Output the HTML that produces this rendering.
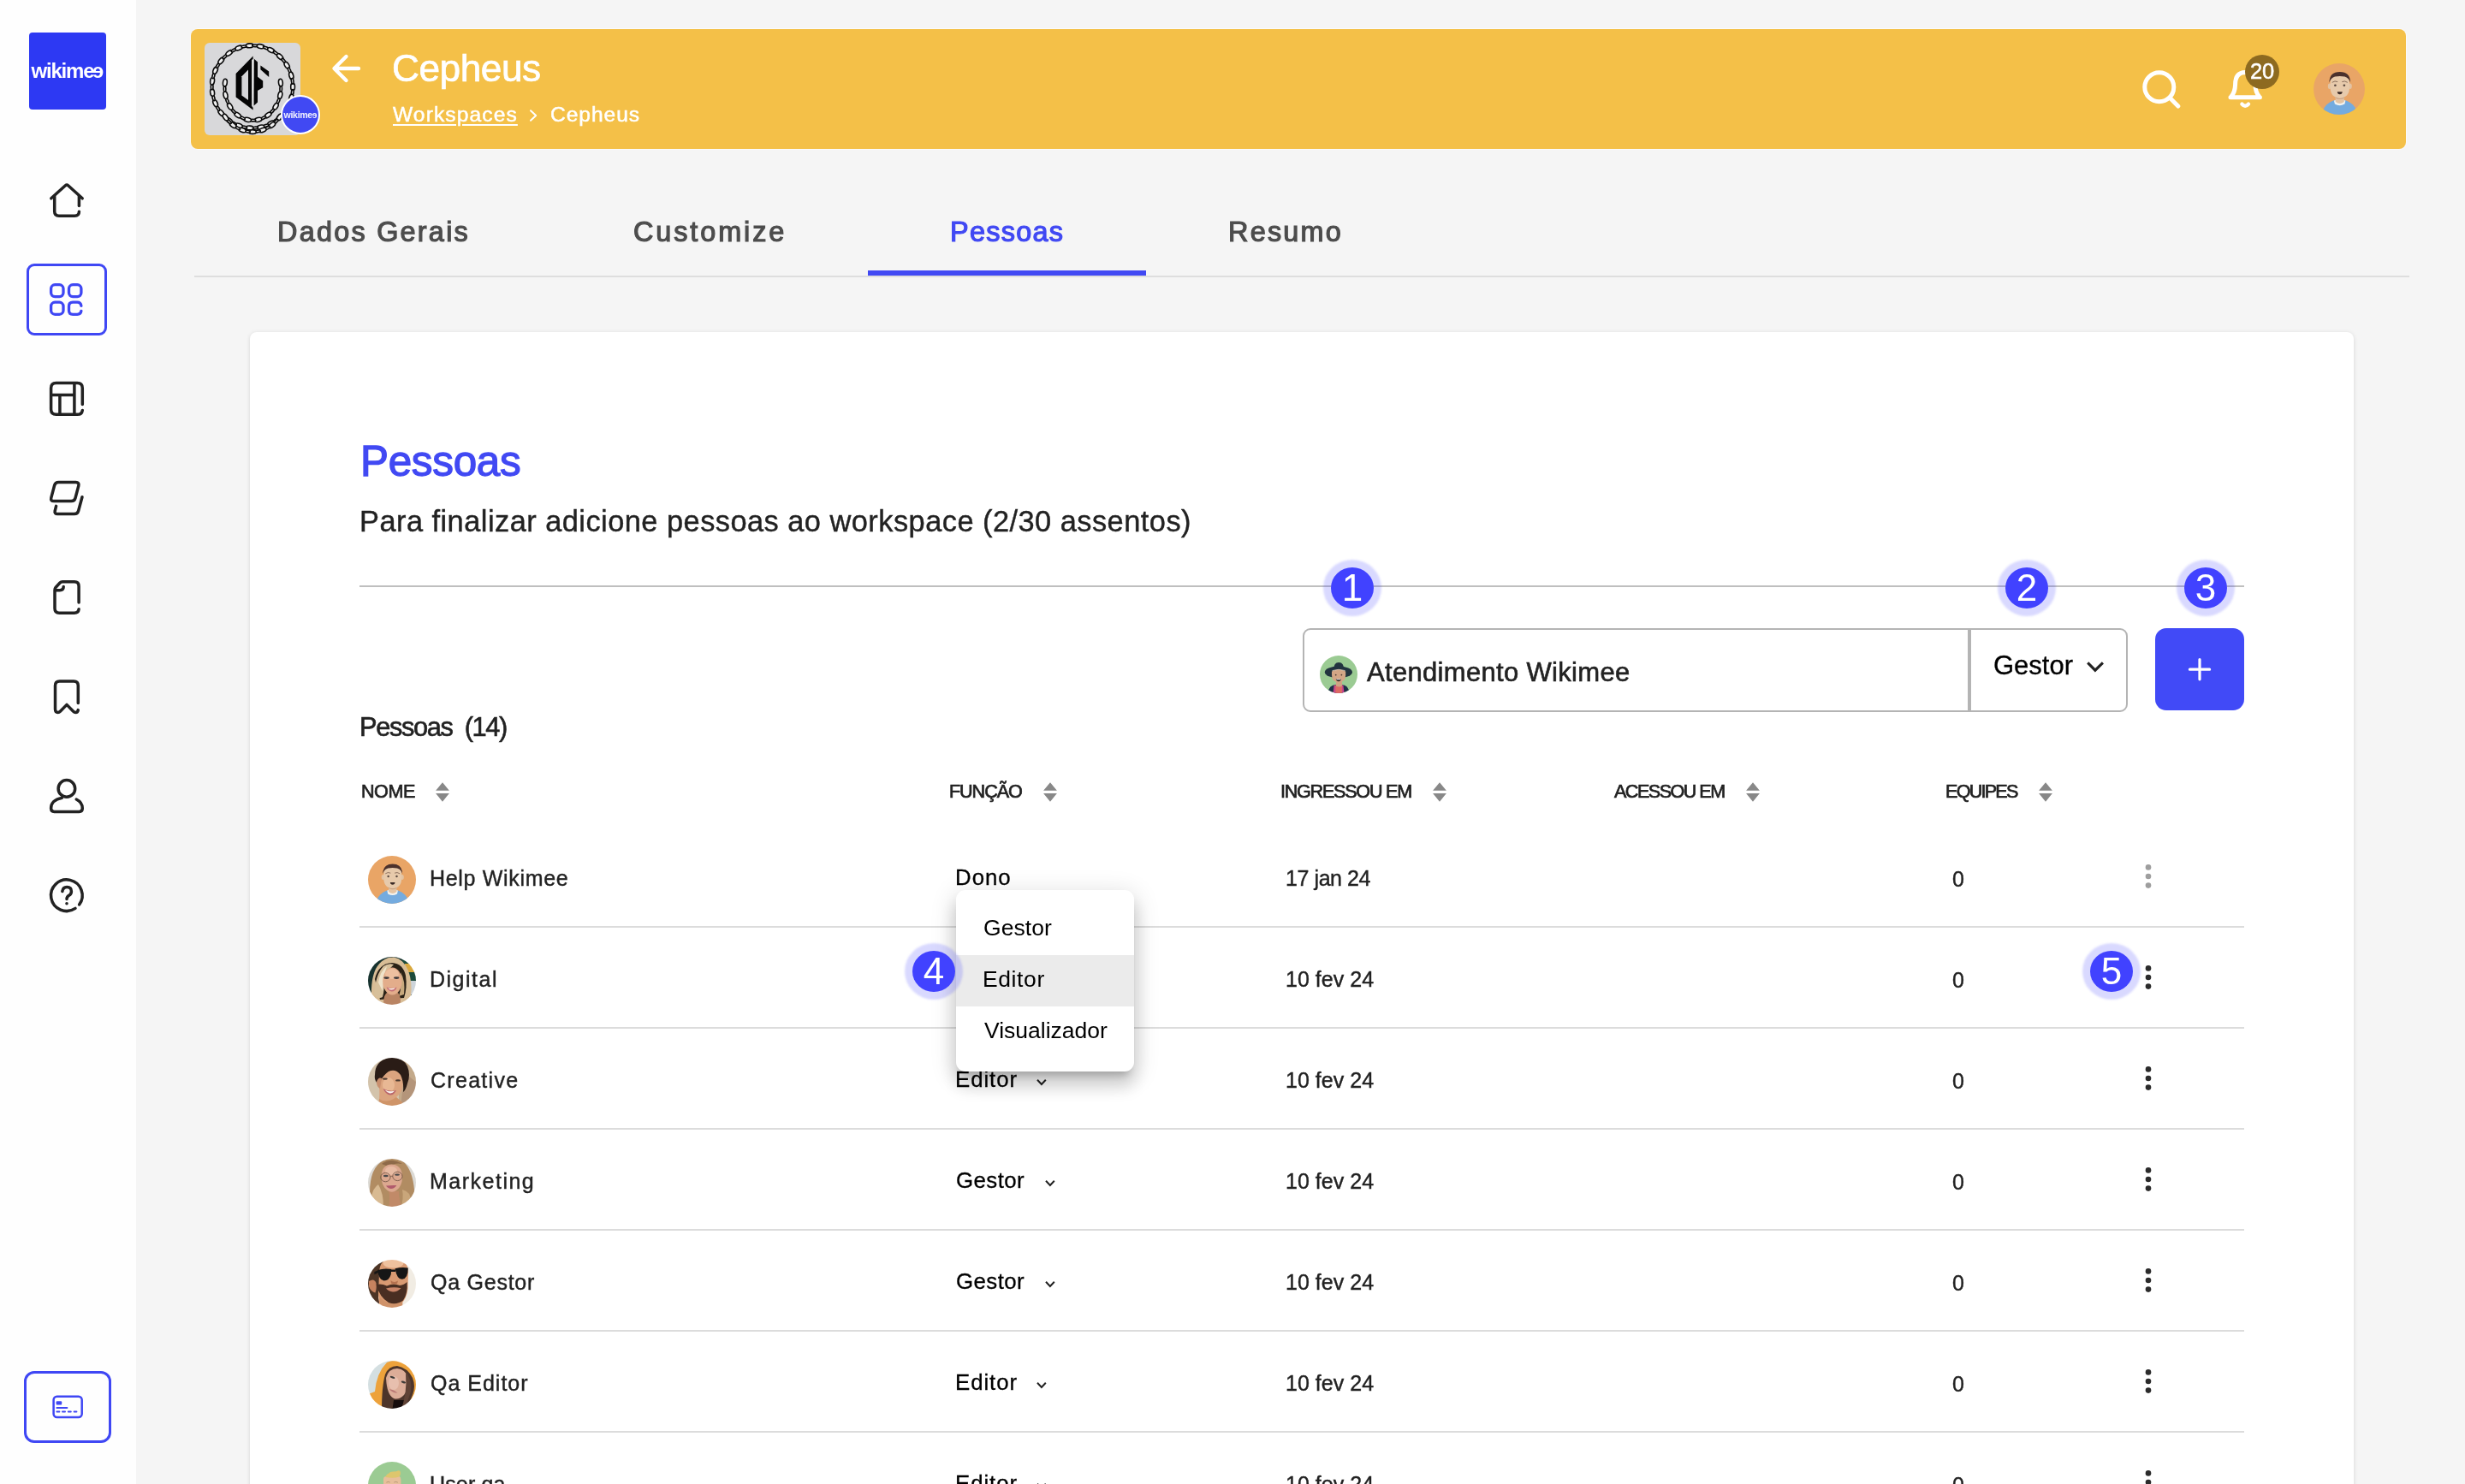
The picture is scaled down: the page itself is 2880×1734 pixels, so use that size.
<!DOCTYPE html>
<html lang="pt-BR">
<head>
<meta charset="utf-8">
<title>Cepheus - Pessoas | wikimee</title>
<style>
*{box-sizing:border-box;margin:0;padding:0}
html{overflow:hidden;background:#f5f5f5}
body{overflow:hidden}
.app{position:relative;width:2880px;height:1734px;overflow:hidden}
body{background:#f5f5f5;font-family:"Liberation Sans",Arial,sans-serif;color:#222}
.abs{position:absolute;display:block}
.t{position:absolute;line-height:1;white-space:nowrap;font-weight:400;display:block;will-change:transform}
h1,h2,p{margin:0}
a{color:inherit}
.z{z-index:6}
.side{position:absolute;left:0;top:0;width:159px;height:1734px;background:#fefefe}
.logo{position:absolute;left:34px;top:38px;width:90px;height:90px;border-radius:4px;background:#2d39f3}
.logotxt{position:absolute;left:0;width:90px;top:33px;text-align:center;color:#fff;font-weight:700;font-size:24px;line-height:1;letter-spacing:-1.2px;white-space:nowrap}
.flip{display:inline-block;transform:scaleX(-1)}
.logotxt,.wsb,.nbadge span,.badge{will-change:transform}
.navbox{position:absolute;left:31px;top:308px;width:94px;height:84px;border:3.5px solid #3f47f4;border-radius:9px}
.paybox{position:absolute;left:28px;top:1602px;width:102px;height:84px;border:3.5px solid #3f47f4;border-radius:12px}
.hdr{position:absolute;left:0;top:0;width:0;height:0}
.hdr:before{content:"";position:absolute;left:223px;top:34px;width:2588px;height:140px;border-radius:8px;background:#f4c048;box-shadow:0 0 0 1px rgba(255,255,255,.55)}
.wsbadge{position:absolute;left:328px;top:111px;width:46px;height:46px;border-radius:50%;background:#4149f3;border:2px solid #fff}
.wsb{position:absolute;left:0;width:42px;top:15.5px;text-align:center;color:rgba(255,255,255,.92);font-weight:700;font-size:10.6px;line-height:1;letter-spacing:-0.35px;white-space:nowrap}
.nbadge{position:absolute;left:2623px;top:64px;width:40px;height:40px;border-radius:50%;background:#8d6a20}
.nbadge span{position:absolute;left:0;top:6.5px;width:40px;text-align:center;color:#fff;font-size:25.5px;line-height:1;font-weight:400;letter-spacing:-0.3px;-webkit-text-stroke:0.5px}
.tabs{position:absolute;left:0;top:0;width:0;height:0}
.tabline{position:absolute;left:227px;top:321.5px;width:2588px;height:2.5px;background:#dedede}
.tabsel{position:absolute;left:1014px;top:316px;width:325px;height:6px;background:#4149f3}
.card{position:absolute;left:0;top:0;width:0;height:0}
.card:before{content:"";position:absolute;left:292px;top:388px;width:2458px;height:1400px;border-radius:8px;background:#fff;box-shadow:0 1.5px 5px rgba(0,0,0,.13)}
.hr{position:absolute;left:420px;width:2202px;height:2.4px;background:#bfbfbf}
.hr2{position:absolute;left:420px;width:2202px;height:2.4px;background:#dcdcdc}
.row{position:static}
.badge{position:absolute;width:50px;height:48px;border-radius:50%;background:#4142ff;color:#fff;font-size:44px;line-height:48px;text-align:center;box-shadow:0 0 2.5px 9px rgba(64,64,255,.2);z-index:7}
.inp{position:absolute;left:1522px;top:734px;width:780px;height:98px;border:2.4px solid #b4b4b4;border-radius:9px 0 0 9px;background:#fff}
.sel{position:absolute;left:2299px;top:734px;width:187px;height:98px;border:2.4px solid #b4b4b4;border-left-width:4.5px;border-radius:0 9px 9px 0;background:#fff}
.add{position:absolute;left:2518px;top:734px;width:104px;height:96px;border:0;border-radius:13px;background:#414af7;padding:0}
.add svg{display:block}
.th{text-transform:none}
.pop{position:absolute;left:1117px;top:1040px;width:208px;height:212px;border-radius:11px;background:#fff;list-style:none;padding:16px 0;z-index:5;box-shadow:0 10px 10px -6px rgba(0,0,0,.2),0 16px 20px 2px rgba(0,0,0,.14),0 6px 28px 4px rgba(0,0,0,.12)}
.pop li{height:60px}
.pop li.on{background:#ebebeb}
.av{position:absolute;border-radius:50%;overflow:hidden;display:block}
</style>
</head>
<body>
<div class="app">
<nav class="side">
<div class="logo"><span id="logo" class="logotxt">wikime<span class="flip">e</span></span></div>
<div class="navbox"></div><div class="paybox"></div><svg class="abs" style="left:0;top:0" width="160" height="1734" viewBox="0 0 160 1734"><g fill="none" stroke="#222" stroke-width="3.5" stroke-linecap="round" stroke-linejoin="round"><path d="M59.8 231.8 L76.4 216.8 Q78 215.4 79.6 216.8 L96.2 231.8"/><path d="M63.7 229.4 V247 Q63.7 252.2 68.9 252.2 H87.2 Q92.4 252.2 92.4 247.2"/><path d="M92.4 229.4 V240.6"/></g><g fill="none" stroke="#3f47f4" stroke-width="3.3" stroke-linecap="round" stroke-linejoin="round"><rect x="59.6" y="332.7" width="14.4" height="13.9" rx="4.6"/><rect x="80.5" y="332.7" width="14.4" height="13.9" rx="4.6"/><rect x="59.6" y="353.2" width="14.4" height="14.1" rx="4.6"/><path d="M94.9 357.4 Q94.4 353.2 90.3 353.2 H85.1 Q80.5 353.2 80.5 357.8 V362.7 Q80.5 367.3 85.1 367.3 H90.3 Q94.4 367.3 94.9 363.4"/></g><g fill="none" stroke="#222" stroke-width="3.5" stroke-linecap="round" stroke-linejoin="round"><path d="M96.3 472.4 V453.6 Q96.3 447.6 90.3 447.6 H65.6 Q59.6 447.6 59.6 453.6 V478.3 Q59.6 484.3 65.6 484.3 H90.3 Q95.6 484.3 96.3 479.4"/><path d="M60 461.4 H86.9 M69.9 461.8 V484 M86.9 448 V484"/></g><g fill="none" stroke="#222" stroke-width="3.5" stroke-linecap="round" stroke-linejoin="round"><path d="M68.4 563.6 H88.6 Q92.8 563.6 91.8 567.6 L88 582 Q87 585.6 83.2 585.6 H63 Q58.8 585.6 59.8 581.6 L63.6 567.2 Q64.6 563.6 68.4 563.6 Z"/><path d="M65.6 591.4 L64.2 597 Q63.4 600.6 67.2 600.6 H86.8 Q90.6 600.6 91.6 597 L96 580.8"/></g><g fill="none" stroke="#222" stroke-width="3.5" stroke-linecap="round" stroke-linejoin="round"><path d="M92.1 704 V685 Q92.1 679.8 86.9 679.8 H73 Q71.2 679.8 70 681 L65.2 686.2 Q64 687.6 64 689.4 V711 Q64 716.2 69.2 716.2 H86.9 Q91.6 716.2 92.1 711.8"/><path d="M65 689.8 H69.8 Q74.2 689.8 74.2 685.6"/></g><g fill="none" stroke="#222" stroke-width="3.5" stroke-linecap="round" stroke-linejoin="round"><path d="M91.3 821.4 V801 Q91.3 795.9 86.2 795.9 H69.6 Q64.5 795.9 64.5 801 V828.8 Q64.5 832.4 67.6 832.4 Q69.2 832.4 70.6 831 L78 823.4 L85.4 831 Q86.8 832.4 88.4 832.4 Q90.8 832.4 91.3 829.6"/></g><g fill="none" stroke="#222" stroke-width="3.5" stroke-linecap="round" stroke-linejoin="round"><circle cx="77.9" cy="921.4" r="9.8"/><path d="M72.4 932.4 Q59.6 934.8 59.6 944.6 Q59.6 948.4 63.4 948.4 H92.5 Q96.3 948.4 96.3 944.6 Q96.3 937.4 89.2 934"/></g><g fill="none" stroke="#222" stroke-width="3.5" stroke-linecap="round" stroke-linejoin="round"><path d="M88 1061.4 A18.3 18.3 0 1 1 92.6 1057"/><path d="M72.8 1041.6 Q73.6 1036.6 78.2 1036.6 Q83.4 1036.6 83.4 1041.4 Q83.4 1044.6 80.6 1046.2 Q78 1047.6 78 1050.6"/></g><circle cx="78" cy="1055.8" r="1.8" fill="#222"/><g fill="none" stroke="#3f47f4" stroke-linecap="round"><rect x="62.6" y="1631.7" width="33.1" height="24.4" rx="4" stroke-width="2.5"/><path d="M66.4 1645 H78.4" stroke-width="2"/><path d="M66.4 1649.6 H69.4 M73 1649.6 H76 M79.8 1649.6 H82.8 M86.6 1649.6 H89.4" stroke-width="2"/></g><rect x="65.6" y="1637.3" width="6.6" height="4.3" rx="1" fill="#3f47f4"/></svg>
</nav>
<header class="hdr">
<svg class="abs" style="left:239px;top:50px;border-radius:6px" width="112" height="108" viewBox="0 0 112 108" role="img"><rect width="112" height="108" fill="#d8d8da"/><g fill="#f0f0f0" stroke="#0a0a0a" stroke-width="1.6"><ellipse cx="103.1" cy="51.4" rx="4.3" ry="2.4" transform="rotate(90 103.1 51.4)"/><ellipse cx="102.7" cy="58.0" rx="3.4" ry="1.3" transform="rotate(98 102.7 58.0)"/><ellipse cx="101.3" cy="64.4" rx="4.3" ry="2.4" transform="rotate(105 101.3 64.4)"/><ellipse cx="99.2" cy="70.6" rx="3.4" ry="1.3" transform="rotate(113 99.2 70.6)"/><ellipse cx="96.2" cy="76.4" rx="4.3" ry="2.4" transform="rotate(121 96.2 76.4)"/><ellipse cx="92.5" cy="81.8" rx="3.4" ry="1.3" transform="rotate(129 92.5 81.8)"/><ellipse cx="88.1" cy="86.6" rx="4.3" ry="2.4" transform="rotate(136 88.1 86.6)"/><ellipse cx="83.1" cy="90.8" rx="3.4" ry="1.3" transform="rotate(144 83.1 90.8)"/><ellipse cx="77.6" cy="94.2" rx="4.3" ry="2.4" transform="rotate(152 77.6 94.2)"/><ellipse cx="71.7" cy="96.8" rx="3.4" ry="1.3" transform="rotate(160 71.7 96.8)"/><ellipse cx="65.5" cy="98.6" rx="4.3" ry="2.4" transform="rotate(168 65.5 98.6)"/><ellipse cx="59.1" cy="99.5" rx="3.4" ry="1.3" transform="rotate(176 59.1 99.5)"/><ellipse cx="52.7" cy="99.5" rx="4.3" ry="2.4" transform="rotate(-176 52.7 99.5)"/><ellipse cx="46.3" cy="98.6" rx="3.4" ry="1.3" transform="rotate(-168 46.3 98.6)"/><ellipse cx="40.1" cy="96.8" rx="4.3" ry="2.4" transform="rotate(-160 40.1 96.8)"/><ellipse cx="34.2" cy="94.2" rx="3.4" ry="1.3" transform="rotate(-152 34.2 94.2)"/><ellipse cx="28.7" cy="90.8" rx="4.3" ry="2.4" transform="rotate(-144 28.7 90.8)"/><ellipse cx="23.7" cy="86.6" rx="3.4" ry="1.3" transform="rotate(-136 23.7 86.6)"/><ellipse cx="19.3" cy="81.8" rx="4.3" ry="2.4" transform="rotate(-129 19.3 81.8)"/><ellipse cx="15.6" cy="76.4" rx="3.4" ry="1.3" transform="rotate(-121 15.6 76.4)"/><ellipse cx="12.6" cy="70.6" rx="4.3" ry="2.4" transform="rotate(-113 12.6 70.6)"/><ellipse cx="10.5" cy="64.4" rx="3.4" ry="1.3" transform="rotate(-105 10.5 64.4)"/><ellipse cx="9.1" cy="58.0" rx="4.3" ry="2.4" transform="rotate(-98 9.1 58.0)"/><ellipse cx="8.7" cy="51.4" rx="3.4" ry="1.3" transform="rotate(-90 8.7 51.4)"/><ellipse cx="9.1" cy="44.8" rx="4.3" ry="2.4" transform="rotate(-82 9.1 44.8)"/><ellipse cx="10.5" cy="38.4" rx="3.4" ry="1.3" transform="rotate(-75 10.5 38.4)"/><ellipse cx="12.6" cy="32.2" rx="4.3" ry="2.4" transform="rotate(-67 12.6 32.2)"/><ellipse cx="15.6" cy="26.4" rx="3.4" ry="1.3" transform="rotate(-59 15.6 26.4)"/><ellipse cx="19.3" cy="21.0" rx="4.3" ry="2.4" transform="rotate(-51 19.3 21.0)"/><ellipse cx="23.7" cy="16.2" rx="3.4" ry="1.3" transform="rotate(-44 23.7 16.2)"/><ellipse cx="28.7" cy="12.0" rx="4.3" ry="2.4" transform="rotate(-36 28.7 12.0)"/><ellipse cx="34.2" cy="8.6" rx="3.4" ry="1.3" transform="rotate(-28 34.2 8.6)"/><ellipse cx="40.1" cy="6.0" rx="4.3" ry="2.4" transform="rotate(-20 40.1 6.0)"/><ellipse cx="46.3" cy="4.2" rx="3.4" ry="1.3" transform="rotate(-12 46.3 4.2)"/><ellipse cx="52.7" cy="3.3" rx="4.3" ry="2.4" transform="rotate(-4 52.7 3.3)"/><ellipse cx="59.1" cy="3.3" rx="3.4" ry="1.3" transform="rotate(4 59.1 3.3)"/><ellipse cx="65.5" cy="4.2" rx="4.3" ry="2.4" transform="rotate(12 65.5 4.2)"/><ellipse cx="71.7" cy="6.0" rx="3.4" ry="1.3" transform="rotate(20 71.7 6.0)"/><ellipse cx="77.6" cy="8.6" rx="4.3" ry="2.4" transform="rotate(28 77.6 8.6)"/><ellipse cx="83.1" cy="12.0" rx="3.4" ry="1.3" transform="rotate(36 83.1 12.0)"/><ellipse cx="88.1" cy="16.2" rx="4.3" ry="2.4" transform="rotate(44 88.1 16.2)"/><ellipse cx="92.5" cy="21.0" rx="3.4" ry="1.3" transform="rotate(51 92.5 21.0)"/><ellipse cx="96.2" cy="26.4" rx="4.3" ry="2.4" transform="rotate(59 96.2 26.4)"/><ellipse cx="99.2" cy="32.2" rx="3.4" ry="1.3" transform="rotate(67 99.2 32.2)"/><ellipse cx="101.3" cy="38.4" rx="4.3" ry="2.4" transform="rotate(75 101.3 38.4)"/><ellipse cx="102.7" cy="44.8" rx="3.4" ry="1.3" transform="rotate(82 102.7 44.8)"/><ellipse cx="88.9" cy="46.6" rx="4.3" ry="2.4" transform="rotate(83 88.9 46.6)"/><ellipse cx="89.2" cy="53.9" rx="3.4" ry="1.3" transform="rotate(92 89.2 53.9)"/><ellipse cx="88.3" cy="61.2" rx="4.3" ry="2.4" transform="rotate(102 88.3 61.2)"/><ellipse cx="86.2" cy="68.1" rx="3.4" ry="1.3" transform="rotate(111 86.2 68.1)"/><ellipse cx="83.1" cy="74.4" rx="4.3" ry="2.4" transform="rotate(121 83.1 74.4)"/><ellipse cx="79.0" cy="80.0" rx="3.4" ry="1.3" transform="rotate(132 79.0 80.0)"/><ellipse cx="74.1" cy="84.5" rx="4.3" ry="2.4" transform="rotate(143 74.1 84.5)"/><ellipse cx="68.6" cy="87.8" rx="3.4" ry="1.3" transform="rotate(155 68.6 87.8)"/><ellipse cx="62.6" cy="89.9" rx="4.3" ry="2.4" transform="rotate(167 62.6 89.9)"/><ellipse cx="56.4" cy="90.6" rx="3.4" ry="1.3" transform="rotate(180 56.4 90.6)"/><ellipse cx="50.2" cy="89.9" rx="4.3" ry="2.4" transform="rotate(-167 50.2 89.9)"/><ellipse cx="44.2" cy="87.8" rx="3.4" ry="1.3" transform="rotate(-155 44.2 87.8)"/><ellipse cx="38.7" cy="84.5" rx="4.3" ry="2.4" transform="rotate(-143 38.7 84.5)"/><ellipse cx="33.8" cy="80.0" rx="3.4" ry="1.3" transform="rotate(-132 33.8 80.0)"/><ellipse cx="29.7" cy="74.4" rx="4.3" ry="2.4" transform="rotate(-121 29.7 74.4)"/><ellipse cx="26.6" cy="68.1" rx="3.4" ry="1.3" transform="rotate(-111 26.6 68.1)"/><ellipse cx="24.5" cy="61.2" rx="4.3" ry="2.4" transform="rotate(-102 24.5 61.2)"/><ellipse cx="23.6" cy="53.9" rx="3.4" ry="1.3" transform="rotate(-92 23.6 53.9)"/><ellipse cx="23.9" cy="46.6" rx="4.3" ry="2.4" transform="rotate(-83 23.9 46.6)"/><ellipse cx="87.5" cy="87.1" rx="4.3" ry="2.4" transform="rotate(125 87.5 87.1)"/><ellipse cx="83.4" cy="92.0" rx="3.4" ry="1.3" transform="rotate(134 83.4 92.0)"/><ellipse cx="78.8" cy="96.2" rx="4.3" ry="2.4" transform="rotate(143 78.8 96.2)"/><ellipse cx="73.5" cy="99.5" rx="3.4" ry="1.3" transform="rotate(152 73.5 99.5)"/><ellipse cx="67.9" cy="102.0" rx="4.3" ry="2.4" transform="rotate(161 67.9 102.0)"/><ellipse cx="62.0" cy="103.5" rx="3.4" ry="1.3" transform="rotate(170 62.0 103.5)"/><ellipse cx="56.0" cy="104.0" rx="4.3" ry="2.4" transform="rotate(180 56.0 104.0)"/><ellipse cx="50.0" cy="103.5" rx="3.4" ry="1.3" transform="rotate(-170 50.0 103.5)"/><ellipse cx="44.1" cy="102.0" rx="4.3" ry="2.4" transform="rotate(-161 44.1 102.0)"/><ellipse cx="38.5" cy="99.5" rx="3.4" ry="1.3" transform="rotate(-152 38.5 99.5)"/><ellipse cx="33.2" cy="96.2" rx="4.3" ry="2.4" transform="rotate(-143 33.2 96.2)"/><ellipse cx="28.6" cy="92.0" rx="3.4" ry="1.3" transform="rotate(-134 28.6 92.0)"/><ellipse cx="24.5" cy="87.1" rx="4.3" ry="2.4" transform="rotate(-125 24.5 87.1)"/></g><path d="M56.6 15.4 L56.6 78.4 L36.6 63.6 V36 Z" fill="#050505"/><path d="M51 31.6 L43.4 39.2 V61.6 L51 67 Z" fill="#d6d6d8"/><path d="M57.6 18.6 L62 22.4 V69.6 L57.6 73.6 Z" fill="#050505"/><path d="M61 39 L68.2 44.4 V52.2 L61 56.6 Z" fill="#050505"/><path d="M65.4 26.6 L75.2 33.6 V40 L65.4 31.2 Z" fill="#050505"/><path d="M55.2 20 L57.4 18.4 L56.8 76 L55.2 74 Z" fill="#f2f2f2"/></svg>
<div class="wsbadge"><span class="wsb">wikime<span class="flip">e</span></span></div>
<svg class="abs" style="left:385px;top:60px" width="40" height="40" viewBox="0 0 40 40"><path d="M34 20 H6 M19.5 6 L5.5 20 L19.5 34" fill="none" stroke="#fff" stroke-width="4.4" stroke-linecap="round" stroke-linejoin="round"/></svg>
<h1 id="h_title" class="t" style="left:458.3px;top:58.0px;font-size:44.2px;color:#fff;font-weight:400;letter-spacing:-0.46px;-webkit-text-stroke:0.7px;">Cepheus</h1>
<a id="bc1" class="t" style="left:459.1px;top:122.0px;font-size:24.6px;color:#fff;font-weight:400;letter-spacing:1.10px;-webkit-text-stroke:0.5px;text-decoration:underline;text-decoration-thickness:2px;text-underline-offset:3px;">Workspaces</a>
<svg class="abs" style="left:616px;top:126px" width="14" height="18" viewBox="0 0 14 18"><path d="M4 3.2 L10.2 9 L4 14.8" fill="none" stroke="#fff" stroke-width="2" stroke-linecap="round" stroke-linejoin="round"/></svg>
<span id="bc2" class="t" style="left:643.0px;top:122.0px;font-size:24.6px;color:#fff;font-weight:400;letter-spacing:0.94px;-webkit-text-stroke:0.5px;">Cepheus</span>
<svg class="abs" style="left:2480px;top:60px" width="200" height="80" viewBox="2480 60 200 80"><g fill="none" stroke="#fff" stroke-linecap="round" stroke-linejoin="round"><circle cx="2522.8" cy="101.8" r="17" stroke-width="5"/><path d="M2535.4 114.6 L2544.8 124" stroke-width="5"/><path d="M2606 113.8 H2640.4 M2606.4 113.4 Q2611.4 108 2611.6 98.6 Q2611.6 84.6 2623.2 84.4 Q2634.8 84.6 2634.8 98.6 Q2635 108 2640 113.4" stroke-width="5"/><path d="M2619.4 121.6 Q2623.2 126 2627 121.6" stroke-width="4.4"/></g></svg>
<div class="nbadge"><span id="nb">20</span></div>
<svg class="av" style="left:2703px;top:74px" width="60" height="60" viewBox="0 0 56 56" role="img"><rect width="56" height="56" fill="#e9a566"/><ellipse cx="28.6" cy="59" rx="20" ry="19.6" fill="#74abdf"/><path d="M22.3 40.6 Q28.6 38.6 34.9 40.6 L34 44.4 Q28.6 47.6 23.2 44.4 Z" fill="#f3f3ef"/><path d="M24 34 H33.4 V42 Q28.7 45.8 24 42 Z" fill="#e4c4a4"/><path d="M24 36.5 Q28.7 39.6 33.4 36.5 V38 Q28.7 40.6 24 38 Z" fill="#c9a585"/><ellipse cx="17.6" cy="25" rx="1.9" ry="3" fill="#e2c3a3"/><ellipse cx="39.9" cy="25" rx="1.9" ry="3" fill="#e2c3a3"/><path d="M18.3 22 Q18.3 10.5 28.7 10.5 Q39.2 10.5 39.2 22 V26 Q39.2 37.8 28.7 37.8 Q18.3 37.8 18.3 26 Z" fill="#e7caab"/><path d="M17.2 21 Q17.4 9.4 28.7 9.4 Q40 9.4 40.2 21 Q38.6 15.6 34 14.4 Q28.7 13.4 23.4 14.4 Q18.8 15.6 17.2 21 Z" fill="#4b312c"/><path d="M20.6 20.6 Q23.4 18.6 26 20" fill="none" stroke="#6b5043" stroke-width="0.7" stroke-linecap="round"/><path d="M31.4 20 Q34 18.6 36.8 20.6" fill="none" stroke="#6b5043" stroke-width="0.7" stroke-linecap="round"/><circle cx="23.7" cy="24" r="1.25" fill="#5c4a40"/><circle cx="33.5" cy="24" r="1.25" fill="#5c4a40"/><path d="M25.9 31 H31.5 Q31.3 33.8 28.7 33.8 Q26.1 33.8 25.9 31 Z" fill="#3a2a26"/></svg>
</header>
<div class="tabs">
<span id="tab1" class="t" style="left:323.6px;top:255.0px;font-size:32.4px;color:#4d4d4d;font-weight:400;letter-spacing:2.25px;-webkit-text-stroke:1.2px;">Dados Gerais</span>
<span id="tab2" class="t" style="left:740.2px;top:255.0px;font-size:32.4px;color:#4d4d4d;font-weight:400;letter-spacing:2.92px;-webkit-text-stroke:1.2px;">Customize</span>
<span id="tab3" class="t" style="left:1110.0px;top:255.0px;font-size:32.4px;color:#4149f3;font-weight:400;letter-spacing:1.29px;-webkit-text-stroke:1.2px;">Pessoas</span>
<span id="tab4" class="t" style="left:1434.9px;top:255.0px;font-size:32.4px;color:#4d4d4d;font-weight:400;letter-spacing:2.24px;-webkit-text-stroke:1.2px;">Resumo</span>
<div class="tabline"></div><div class="tabsel"></div>
</div>
<main class="card">
<h2 id="title" class="t" style="left:421.0px;top:514.0px;font-size:49.4px;color:#4149f3;font-weight:400;letter-spacing:-0.29px;-webkit-text-stroke:1.3px;">Pessoas</h2>
<p id="sub" class="t" style="left:420.4px;top:592.0px;font-size:34.4px;color:#222;font-weight:400;letter-spacing:0.46px;-webkit-text-stroke:0.4px;">Para finalizar adicione pessoas ao workspace (2/30 assentos)</p>
<div class="hr" style="top:684px"></div>
<div class="badge" style="left:1555.0px;top:662.7px">1</div>
<div class="badge" style="left:2342.9px;top:662.7px">2</div>
<div class="badge" style="left:2551.8px;top:662.7px">3</div>
<div class="inp"></div><div class="sel"></div>
<svg class="av" style="left:1542px;top:766px" width="44" height="44" viewBox="0 0 44 44" role="img"><rect width="44" height="44" fill="#9bcb93"/><path d="M9.5 44 Q10.5 34 19 34 H25.5 Q33.5 34 34.5 44 Z" fill="#1f3148"/><path d="M15.6 44 L16.6 34.4 H27.4 L28.6 44 Z" fill="#c8478a"/><path d="M18.3 44 V35 H26 V44 Z" fill="#dc6a64"/><path d="M19 29 H26 V35.4 Q22.5 37.6 19 35.4 Z" fill="#cfa283"/><ellipse cx="21.9" cy="19.4" rx="16.1" ry="6.8" fill="#22343f"/><path d="M16.3 17 Q16 8 22.2 8 Q28.4 8 28.1 17 Z" fill="#22343f"/><path d="M14 18.4 Q22 14.6 30.2 18.4 V23 Q30.2 31 22.1 31 Q14 31 14 23 Z" fill="#d3a686"/><path d="M14.6 17.6 Q22 15 29.6 17.6" fill="none" stroke="#e8d7c2" stroke-width="0.8"/><circle cx="18.7" cy="22.6" r="0.9" fill="#4a3a33"/><circle cx="25.4" cy="22.6" r="0.9" fill="#4a3a33"/><path d="M18.9 27.2 H24.9 Q24.6 30.2 21.9 30.2 Q19.2 30.2 18.9 27.2 Z" fill="#3b2b28"/><path d="M19.3 27.2 H24.5 L24.2 28.2 H19.6 Z" fill="#efefef"/></svg>
<span id="inp_t" class="t" style="left:1596.5px;top:770.0px;font-size:31px;color:#222;font-weight:400;letter-spacing:0.32px;-webkit-text-stroke:0.6px;">Atendimento Wikimee</span>
<span id="sel_t" class="t" style="left:2329.3px;top:762.0px;font-size:31px;color:#000;font-weight:400;-webkit-text-stroke:0.3px;">Gestor</span>
<svg class="abs" style="left:2436px;top:771px" width="25" height="17" viewBox="0 0 25 17"><path d="M3.2 3.3 L11.9 12.2 L20.9 3.3" fill="none" stroke="#222" stroke-width="3.1" stroke-linecap="butt" stroke-linejoin="miter"/></svg>
<button class="add" aria-label="Adicionar"><svg width="104" height="96" viewBox="0 0 104 96"><path d="M52 36.6 V59.8 M40.4 48.2 H63.6" stroke="#fff" stroke-width="3.2" stroke-linecap="round"/></svg></button>
<span id="cnt" class="t" style="left:420.0px;top:835.0px;font-size:30.8px;color:#222;font-weight:400;letter-spacing:-1.39px;-webkit-text-stroke:0.6px;">Pessoas&nbsp; (14)</span>
<span id="th1" class="t th" style="left:422.1px;top:914.0px;font-size:21.6px;color:#222;font-weight:400;letter-spacing:-0.47px;-webkit-text-stroke:0.7px;">NOME</span>
<svg class="abs" style="left:507.9px;top:913px" width="18" height="25" viewBox="0 0 18 25"><path d="M9 1.2 L16.9 10.8 H1.1 Z M1.1 14 H16.9 L9 23.7 Z" fill="#888"/></svg>
<span id="th2" class="t th" style="left:1109.2px;top:914.0px;font-size:21.6px;color:#222;font-weight:400;letter-spacing:-1.08px;-webkit-text-stroke:0.7px;">FUNÇÃO</span>
<svg class="abs" style="left:1218.2px;top:913px" width="18" height="25" viewBox="0 0 18 25"><path d="M9 1.2 L16.9 10.8 H1.1 Z M1.1 14 H16.9 L9 23.7 Z" fill="#888"/></svg>
<span id="th3" class="t th" style="left:1496.2px;top:914.0px;font-size:21.6px;color:#222;font-weight:400;letter-spacing:-1.26px;-webkit-text-stroke:0.7px;">INGRESSOU EM</span>
<svg class="abs" style="left:1673.2px;top:913px" width="18" height="25" viewBox="0 0 18 25"><path d="M9 1.2 L16.9 10.8 H1.1 Z M1.1 14 H16.9 L9 23.7 Z" fill="#888"/></svg>
<span id="th4" class="t th" style="left:1885.8px;top:914.0px;font-size:21.6px;color:#222;font-weight:400;letter-spacing:-1.53px;-webkit-text-stroke:0.7px;">ACESSOU EM</span>
<svg class="abs" style="left:2039.1px;top:913px" width="18" height="25" viewBox="0 0 18 25"><path d="M9 1.2 L16.9 10.8 H1.1 Z M1.1 14 H16.9 L9 23.7 Z" fill="#888"/></svg>
<span id="th5" class="t th" style="left:2273.2px;top:914.0px;font-size:21.6px;color:#222;font-weight:400;letter-spacing:-1.77px;-webkit-text-stroke:0.7px;">EQUIPES</span>
<svg class="abs" style="left:2380.8px;top:913px" width="18" height="25" viewBox="0 0 18 25"><path d="M9 1.2 L16.9 10.8 H1.1 Z M1.1 14 H16.9 L9 23.7 Z" fill="#888"/></svg>
<div class="row">
<svg class="av" style="left:430px;top:1000px" width="56" height="56" viewBox="0 0 56 56" role="img"><rect width="56" height="56" fill="#e9a566"/><ellipse cx="28.6" cy="59" rx="20" ry="19.6" fill="#74abdf"/><path d="M22.3 40.6 Q28.6 38.6 34.9 40.6 L34 44.4 Q28.6 47.6 23.2 44.4 Z" fill="#f3f3ef"/><path d="M24 34 H33.4 V42 Q28.7 45.8 24 42 Z" fill="#e4c4a4"/><path d="M24 36.5 Q28.7 39.6 33.4 36.5 V38 Q28.7 40.6 24 38 Z" fill="#c9a585"/><ellipse cx="17.6" cy="25" rx="1.9" ry="3" fill="#e2c3a3"/><ellipse cx="39.9" cy="25" rx="1.9" ry="3" fill="#e2c3a3"/><path d="M18.3 22 Q18.3 10.5 28.7 10.5 Q39.2 10.5 39.2 22 V26 Q39.2 37.8 28.7 37.8 Q18.3 37.8 18.3 26 Z" fill="#e7caab"/><path d="M17.2 21 Q17.4 9.4 28.7 9.4 Q40 9.4 40.2 21 Q38.6 15.6 34 14.4 Q28.7 13.4 23.4 14.4 Q18.8 15.6 17.2 21 Z" fill="#4b312c"/><path d="M20.6 20.6 Q23.4 18.6 26 20" fill="none" stroke="#6b5043" stroke-width="0.7" stroke-linecap="round"/><path d="M31.4 20 Q34 18.6 36.8 20.6" fill="none" stroke="#6b5043" stroke-width="0.7" stroke-linecap="round"/><circle cx="23.7" cy="24" r="1.25" fill="#5c4a40"/><circle cx="33.5" cy="24" r="1.25" fill="#5c4a40"/><path d="M25.9 31 H31.5 Q31.3 33.8 28.7 33.8 Q26.1 33.8 25.9 31 Z" fill="#3a2a26"/></svg>
<span id="n0" class="t" style="left:501.9px;top:1014.0px;font-size:25px;color:#222;font-weight:400;letter-spacing:0.68px;-webkit-text-stroke:0.4px;">Help Wikimee</span>
<span id="r0" class="t" style="left:1115.5px;top:1013.0px;font-size:25.8px;color:#000;font-weight:400;letter-spacing:1.00px;-webkit-text-stroke:0.3px;">Dono</span>
<span id="d0" class="t" style="left:1502.2px;top:1014.0px;font-size:25px;color:#222;font-weight:400;letter-spacing:-0.42px;-webkit-text-stroke:0.4px;">17 jan 24</span>
<span id="e0" class="t" style="left:2281.2px;top:1015.0px;font-size:25px;color:#222;font-weight:400;-webkit-text-stroke:0.4px;">0</span>
<svg class="abs" style="left:2505px;top:1008.9px" width="10" height="30" viewBox="0 0 10 30"><circle cx="5" cy="4.4" r="3.3" fill="#9e9e9e"/><circle cx="5" cy="15" r="3.3" fill="#9e9e9e"/><circle cx="5" cy="25.6" r="3.3" fill="#9e9e9e"/></svg>
</div>
<div class="hr2" style="top:1082px"></div>
<div class="row">
<svg class="av" style="left:430px;top:1118px" width="56" height="56" viewBox="0 0 56 56" role="img"><defs><filter id="b2" x="-30%" y="-30%" width="160%" height="160%"><feGaussianBlur stdDeviation="0.7"/></filter></defs><g filter="url(#b2)"><rect x="-6" y="-6" width="68" height="68" fill="#17302f"/><rect x="40" y="-4" width="22" height="40" fill="#1f4b3b"/><rect x="43" y="8" width="16" height="10" fill="#d9a83e"/><rect x="49" y="28" width="12" height="16" fill="#cdd4da"/><path d="M5 58 Q1.5 30 9 14 Q17 0 30 0.5 Q41 2 47 16 Q52 30 50 46 L44 58 Z" fill="#d8bd96"/><path d="M8 26 Q12 8 28 7 Q41 8 44 22 Q46 36 42 48 L14 50 Z" fill="#2a2018"/><path d="M7 44 Q9 20 18 11 Q24 7 30 9 Q20 18 19 30 Q19 40 17 47 Q12 50 7 44 Z" fill="#d7c09b"/><path d="M12 30 Q14 17 22 11 Q18 22 17 40 Z" fill="#efe3cb"/><path d="M38 18 Q44 28 42 44 L36 46 Q40 34 38 18 Z" fill="#c7a97d"/><path d="M18 52 Q19 44 22 42 H35 Q38 46 38 52 L36 58 H20 Z" fill="#b98464"/><ellipse cx="28.4" cy="28.5" rx="11.2" ry="16" fill="#e3ad8b"/><ellipse cx="28" cy="20" rx="8" ry="6" fill="#eec0a0"/><ellipse cx="21.6" cy="24.6" rx="3.2" ry="1.3" fill="#3f3a3c"/><ellipse cx="33.2" cy="24.6" rx="3.2" ry="1.3" fill="#3f3a3c"/><path d="M21.6 35.6 Q27.7 38 33.6 35.4 Q31.8 40.4 27.7 40.4 Q23.6 40.4 21.6 35.6 Z" fill="#c46f76"/><path d="M23.4 36.4 Q27.7 37.6 31.8 36.2 Q30.6 38.6 27.7 38.6 Q24.8 38.6 23.4 36.4 Z" fill="#fbf3ee"/></g></svg>
<span id="n1" class="t" style="left:501.9px;top:1132.0px;font-size:25px;color:#222;font-weight:400;letter-spacing:1.50px;-webkit-text-stroke:0.4px;">Digital</span>
<span id="d1" class="t" style="left:1502.2px;top:1132.0px;font-size:25px;color:#222;font-weight:400;letter-spacing:0.04px;-webkit-text-stroke:0.4px;">10 fev 24</span>
<span id="e1" class="t" style="left:2281.2px;top:1133.0px;font-size:25px;color:#222;font-weight:400;-webkit-text-stroke:0.4px;">0</span>
<svg class="abs" style="left:2505px;top:1126.9px" width="10" height="30" viewBox="0 0 10 30"><circle cx="5" cy="4.4" r="3.3" fill="#2b2b2b"/><circle cx="5" cy="15" r="3.3" fill="#2b2b2b"/><circle cx="5" cy="25.6" r="3.3" fill="#2b2b2b"/></svg>
</div>
<div class="hr2" style="top:1200px"></div>
<div class="row">
<svg class="av" style="left:430px;top:1236px" width="56" height="56" viewBox="0 0 56 56" role="img"><defs><filter id="b3" x="-30%" y="-30%" width="160%" height="160%"><feGaussianBlur stdDeviation="0.7"/></filter></defs><g filter="url(#b3)"><rect x="-6" y="-6" width="68" height="68" fill="#d3c3ab"/><rect x="36" y="-6" width="26" height="68" fill="#c3a98a"/><path d="M40 40 Q46 30 46 20 L58 30 V58 H38 Z" fill="#b4957a"/><path d="M12 58 Q14 44 13 34 Q12 14 28 12 Q42 12 41 28 Q41 40 33 46 L36 58 Z" fill="#dba47f"/><ellipse cx="24" cy="32" rx="7" ry="9" fill="#e8b894"/><path d="M12 58 L13 48 Q22 54 33 46 L40 52 L44 58 Z" fill="#cf9467"/><path d="M8 20 Q8 4 24 0 Q40 -2 46 10 Q50 20 46 30 Q44 38 41 40 Q42 28 38 20 Q32 12 24 16 Q18 20 14 28 Q13 36 11 30 Q7 26 8 20 Z" fill="#2a1d17"/><path d="M10 28 Q12 22 16 24 L14 36 Q10 34 10 28 Z" fill="#c98f6e"/><ellipse cx="19.8" cy="24.6" rx="3" ry="1.2" fill="#4c3a30"/><ellipse cx="35" cy="26.4" rx="3" ry="1.2" fill="#4c3a30"/><path d="M17.6 36 Q25 40 33 38 Q30 44 25.6 43.6 Q20.6 42.6 17.6 36 Z" fill="#b9656a"/><path d="M19.6 37.4 Q25.2 40.2 31 38.8 Q28.6 41.8 25.4 41.4 Q22 40.6 19.6 37.4 Z" fill="#f7f2ef"/></g></svg>
<span id="n2" class="t" style="left:502.9px;top:1250.0px;font-size:25px;color:#222;font-weight:400;letter-spacing:1.29px;-webkit-text-stroke:0.4px;">Creative</span>
<span id="r2" class="t" style="left:1115.5px;top:1249.0px;font-size:25.8px;color:#000;font-weight:400;letter-spacing:0.92px;-webkit-text-stroke:0.3px;">Editor</span>
<svg class="abs" style="left:1210.2px;top:1259.7px" width="14" height="9" viewBox="0 0 14 9"><path d="M2 1.8 L6.9 7 L11.8 1.8" fill="none" stroke="#222" stroke-width="2" stroke-linecap="butt" stroke-linejoin="miter"/></svg>
<span id="d2" class="t" style="left:1502.2px;top:1250.0px;font-size:25px;color:#222;font-weight:400;letter-spacing:0.04px;-webkit-text-stroke:0.4px;">10 fev 24</span>
<span id="e2" class="t" style="left:2281.2px;top:1251.0px;font-size:25px;color:#222;font-weight:400;-webkit-text-stroke:0.4px;">0</span>
<svg class="abs" style="left:2505px;top:1244.9px" width="10" height="30" viewBox="0 0 10 30"><circle cx="5" cy="4.4" r="3.3" fill="#2b2b2b"/><circle cx="5" cy="15" r="3.3" fill="#2b2b2b"/><circle cx="5" cy="25.6" r="3.3" fill="#2b2b2b"/></svg>
</div>
<div class="hr2" style="top:1318px"></div>
<div class="row">
<svg class="av" style="left:430px;top:1354px" width="56" height="56" viewBox="0 0 56 56" role="img"><defs><filter id="b4" x="-30%" y="-30%" width="160%" height="160%"><feGaussianBlur stdDeviation="0.7"/></filter></defs><g filter="url(#b4)"><rect x="-6" y="-6" width="68" height="68" fill="#dbd9d4"/><path d="M2 40 Q2 10 18 2 Q30 -3 42 4 Q52 14 54 36 Q54 50 46 60 H8 Q2 52 2 40 Z" fill="#b18c62"/><path d="M4 44 Q6 34 12 30 Q18 40 18 56 H8 Z" fill="#d8ba92"/><path d="M40 36 Q50 38 50 50 L44 58 H38 Q42 46 40 36 Z" fill="#c9a67a"/><path d="M16 6 Q26 -2 40 6 Q30 4 26 10 Z" fill="#8e6a48"/><path d="M24 58 Q26 44 24 38 H36 Q36 48 40 58 Z" fill="#c18a68"/><path d="M15.6 20 Q16 7 27.4 6.4 Q39.4 7 40 20 Q40.4 32 33 37 Q28 40.4 22.6 37 Q15.4 32 15.6 20 Z" fill="#dca88f"/><ellipse cx="27" cy="14" rx="7" ry="5" fill="#e8bba3"/><ellipse cx="20.8" cy="20" rx="3" ry="1.2" fill="#4a4a4c"/><ellipse cx="34" cy="18.6" rx="3" ry="1.2" fill="#4a4a4c"/><path d="M21 31.6 Q27 30.6 33.4 31 Q30.8 35 27 35 Q23.4 35 21 31.6 Z" fill="#b05a6c"/></g><g fill="none" stroke="#5d4538" stroke-width="0.9" opacity=".8"><ellipse cx="20.4" cy="21.6" rx="5.6" ry="5.2"/><ellipse cx="34.4" cy="20.4" rx="5.6" ry="5.2"/><path d="M26 21 Q27.4 20 28.8 20.6"/></g></svg>
<span id="n3" class="t" style="left:501.9px;top:1368.0px;font-size:25px;color:#222;font-weight:400;letter-spacing:1.50px;-webkit-text-stroke:0.4px;">Marketing</span>
<span id="r3" class="t" style="left:1116.5px;top:1367.0px;font-size:25.8px;color:#000;font-weight:400;letter-spacing:0.44px;-webkit-text-stroke:0.3px;">Gestor</span>
<svg class="abs" style="left:1219.6px;top:1377.7px" width="14" height="9" viewBox="0 0 14 9"><path d="M2 1.8 L6.9 7 L11.8 1.8" fill="none" stroke="#222" stroke-width="2" stroke-linecap="butt" stroke-linejoin="miter"/></svg>
<span id="d3" class="t" style="left:1502.2px;top:1368.0px;font-size:25px;color:#222;font-weight:400;letter-spacing:0.04px;-webkit-text-stroke:0.4px;">10 fev 24</span>
<span id="e3" class="t" style="left:2281.2px;top:1369.0px;font-size:25px;color:#222;font-weight:400;-webkit-text-stroke:0.4px;">0</span>
<svg class="abs" style="left:2505px;top:1362.9px" width="10" height="30" viewBox="0 0 10 30"><circle cx="5" cy="4.4" r="3.3" fill="#2b2b2b"/><circle cx="5" cy="15" r="3.3" fill="#2b2b2b"/><circle cx="5" cy="25.6" r="3.3" fill="#2b2b2b"/></svg>
</div>
<div class="hr2" style="top:1436px"></div>
<div class="row">
<svg class="av" style="left:430px;top:1472px" width="56" height="56" viewBox="0 0 56 56" role="img"><defs><filter id="b5" x="-30%" y="-30%" width="160%" height="160%"><feGaussianBlur stdDeviation="0.75"/></filter></defs><g filter="url(#b5)"><rect x="-6" y="-6" width="68" height="68" fill="#f1ece3"/><path d="M-6 -6 H22 L16 20 L12 44 L16 62 H-6 Z" fill="#4d3528"/><path d="M13 16 Q13 -2 30 -3 Q46 -2 47 14 L46.5 34 Q45 46 38 52 L40 62 H14 L12 40 Z" fill="#d99a72"/><ellipse cx="29.5" cy="4" rx="12" ry="5.5" fill="#efc19e"/><path d="M1 25 Q7 21 9.4 27 Q10.4 34 8.4 38.4 Q3 37 1 31 Z" fill="#c7835f"/><path d="M14 44 Q26 56 40 46 L41 62 H13 Z" fill="#cf9269"/><path d="M9.6 29 Q16 27.6 22 30.6 Q29.6 26.6 37 30 Q42 29.6 45.6 26 Q46.6 40 41 47.4 Q33 53.4 24 50 Q13.6 44 9.6 29 Z" fill="#4a2e20"/><path d="M21 33.4 Q30 31 38.6 33.2 Q34 37.6 29 37.4 Q24 37 21 33.4 Z" fill="#c98468"/><path d="M26.4 24 Q30.4 27.6 35 24.6 L34 28 Q30 29.4 27 27.6 Z" fill="#b5714f"/></g><g filter="url(#b5x)"><path d="M11.2 12 Q19 9.4 27.2 11 L26.8 17 Q24.6 24.6 18.6 24.6 Q12.4 23.6 11.2 12 Z M31.6 10.2 Q39 8.2 46.8 9.4 Q46.8 22 39.8 22.8 Q33.6 22.8 31.6 10.2 Z M26.6 11.4 H32 V14 H26.6 Z M7.4 14 L12 12.2 V15 L7.4 17.2 Z" fill="#171614"/></g><defs><filter id="b5x"><feGaussianBlur stdDeviation="0.4"/></filter></defs></svg>
<span id="n4" class="t" style="left:502.9px;top:1486.0px;font-size:25px;color:#222;font-weight:400;letter-spacing:0.75px;-webkit-text-stroke:0.4px;">Qa Gestor</span>
<span id="r4" class="t" style="left:1116.5px;top:1485.0px;font-size:25.8px;color:#000;font-weight:400;letter-spacing:0.44px;-webkit-text-stroke:0.3px;">Gestor</span>
<svg class="abs" style="left:1219.6px;top:1495.7px" width="14" height="9" viewBox="0 0 14 9"><path d="M2 1.8 L6.9 7 L11.8 1.8" fill="none" stroke="#222" stroke-width="2" stroke-linecap="butt" stroke-linejoin="miter"/></svg>
<span id="d4" class="t" style="left:1502.2px;top:1486.0px;font-size:25px;color:#222;font-weight:400;letter-spacing:0.04px;-webkit-text-stroke:0.4px;">10 fev 24</span>
<span id="e4" class="t" style="left:2281.2px;top:1487.0px;font-size:25px;color:#222;font-weight:400;-webkit-text-stroke:0.4px;">0</span>
<svg class="abs" style="left:2505px;top:1480.9px" width="10" height="30" viewBox="0 0 10 30"><circle cx="5" cy="4.4" r="3.3" fill="#2b2b2b"/><circle cx="5" cy="15" r="3.3" fill="#2b2b2b"/><circle cx="5" cy="25.6" r="3.3" fill="#2b2b2b"/></svg>
</div>
<div class="hr2" style="top:1554px"></div>
<div class="row">
<svg class="av" style="left:430px;top:1590px" width="56" height="56" viewBox="0 0 56 56" role="img"><defs><filter id="b6" x="-30%" y="-30%" width="160%" height="160%"><feGaussianBlur stdDeviation="0.7"/></filter></defs><g filter="url(#b6)"><rect x="-6" y="-6" width="68" height="68" fill="#d4dfe1"/><path d="M-2 40 L8 36 Q10 14 22 2 Q32 -3 44 4 Q56 14 58 30 L58 60 H-2 Z" fill="#eda23a"/><path d="M16 58 Q16 30 20 16 Q24 6 34 6 Q46 8 52 20 Q56 30 52 40 Q48 52 40 60 Z" fill="#4e362b"/><path d="M30 46 H42 L40 60 H28 Z" fill="#140f0d"/><path d="M21 20 Q24 9 34 9 Q44 10 47 20 Q48 32 42 40 Q36 46 30 44 Q22 40 21 20 Z" fill="#dcad98"/><ellipse cx="30" cy="26" rx="6" ry="8" fill="#e7bfae"/><path d="M44 14 Q52 22 50 36 Q46 48 42 58 L38 58 Q46 40 44 14 Z" fill="#5e4336"/><ellipse cx="28.6" cy="19.4" rx="3" ry="1.2" fill="#3c3a38" transform="rotate(18 28.6 19.4)"/><ellipse cx="41.4" cy="25" rx="2.8" ry="1.2" fill="#3c3a38" transform="rotate(18 41.4 25)"/><path d="M24.6 33 Q30 33.6 34.6 37.4 Q29 38 24.6 33 Z" fill="#b87874"/></g></svg>
<span id="n5" class="t" style="left:502.9px;top:1604.0px;font-size:25px;color:#222;font-weight:400;letter-spacing:1.00px;-webkit-text-stroke:0.4px;">Qa Editor</span>
<span id="r5" class="t" style="left:1115.5px;top:1603.0px;font-size:25.8px;color:#000;font-weight:400;letter-spacing:0.92px;-webkit-text-stroke:0.3px;">Editor</span>
<svg class="abs" style="left:1210.2px;top:1613.7px" width="14" height="9" viewBox="0 0 14 9"><path d="M2 1.8 L6.9 7 L11.8 1.8" fill="none" stroke="#222" stroke-width="2" stroke-linecap="butt" stroke-linejoin="miter"/></svg>
<span id="d5" class="t" style="left:1502.2px;top:1604.0px;font-size:25px;color:#222;font-weight:400;letter-spacing:0.04px;-webkit-text-stroke:0.4px;">10 fev 24</span>
<span id="e5" class="t" style="left:2281.2px;top:1605.0px;font-size:25px;color:#222;font-weight:400;-webkit-text-stroke:0.4px;">0</span>
<svg class="abs" style="left:2505px;top:1598.9px" width="10" height="30" viewBox="0 0 10 30"><circle cx="5" cy="4.4" r="3.3" fill="#2b2b2b"/><circle cx="5" cy="15" r="3.3" fill="#2b2b2b"/><circle cx="5" cy="25.6" r="3.3" fill="#2b2b2b"/></svg>
</div>
<div class="hr2" style="top:1672px"></div>
<div class="row">
<svg class="av" style="left:430px;top:1708px" width="56" height="56" viewBox="0 0 56 56" role="img"><rect width="56" height="56" fill="#9bcb93"/><path d="M18 20 Q18 18 20.4 17 H36.6 Q38.4 18 38.4 21 V40 H18 Z" fill="#e8bf9b"/><path d="M20.2 18 Q21.6 14.6 24.4 13.6 Q25.6 11.8 29 11.6 Q33 11.8 35.4 10.2 Q37.6 10 38 12.6 Q38.4 15.6 36.4 17.6 Q30 19.8 20.2 18 Z" fill="#ddc66d"/><path d="M21.4 24.2 Q23.6 22.8 25.6 24" fill="none" stroke="#a98f6e" stroke-width="0.8"/><path d="M30.4 24 Q32.6 22.8 34.8 24.2" fill="none" stroke="#a98f6e" stroke-width="0.8"/></svg>
<span id="n6" class="t" style="left:501.9px;top:1722.0px;font-size:25px;color:#222;font-weight:400;letter-spacing:0.16px;-webkit-text-stroke:0.4px;">User qa</span>
<span id="r6" class="t" style="left:1115.5px;top:1721.0px;font-size:25.8px;color:#000;font-weight:400;letter-spacing:0.92px;-webkit-text-stroke:0.3px;">Editor</span>
<svg class="abs" style="left:1210.2px;top:1731.7px" width="14" height="9" viewBox="0 0 14 9"><path d="M2 1.8 L6.9 7 L11.8 1.8" fill="none" stroke="#222" stroke-width="2" stroke-linecap="butt" stroke-linejoin="miter"/></svg>
<span id="d6" class="t" style="left:1502.2px;top:1722.0px;font-size:25px;color:#222;font-weight:400;letter-spacing:0.04px;-webkit-text-stroke:0.4px;">10 fev 24</span>
<span id="e6" class="t" style="left:2281.2px;top:1723.0px;font-size:25px;color:#222;font-weight:400;-webkit-text-stroke:0.4px;">0</span>
<svg class="abs" style="left:2505px;top:1716.9px" width="10" height="30" viewBox="0 0 10 30"><circle cx="5" cy="4.4" r="3.3" fill="#2b2b2b"/><circle cx="5" cy="15" r="3.3" fill="#2b2b2b"/><circle cx="5" cy="25.6" r="3.3" fill="#2b2b2b"/></svg>
</div>
<div class="badge" style="left:2441.9px;top:1110.8px">5</div>
<div class="badge" style="left:1065.8px;top:1111.0px">4</div>
<ul class="pop" role="listbox">
<li role="option"><span id="p1" class="t" style="left:32.0px;top:31.0px;font-size:26.5px;color:#000;font-weight:400;letter-spacing:0.08px;">Gestor</span></li>
<li role="option" class="on"><span id="p2" class="t" style="left:31.0px;top:91.0px;font-size:26.5px;color:#000;font-weight:400;letter-spacing:0.60px;">Editor</span></li>
<li role="option"><span id="p3" class="t" style="left:33.0px;top:151.0px;font-size:26.5px;color:#000;font-weight:400;">Visualizador</span></li>
</ul>
</main>
</div>
<script>(function(){var a=document.querySelector(".app");function fit(){var w=window.innerWidth||2880;a.style.zoom=(Math.abs(w-2880)>2)?(w/2880):"";}fit();window.addEventListener("resize",fit);})();</script>
</body>
</html>
